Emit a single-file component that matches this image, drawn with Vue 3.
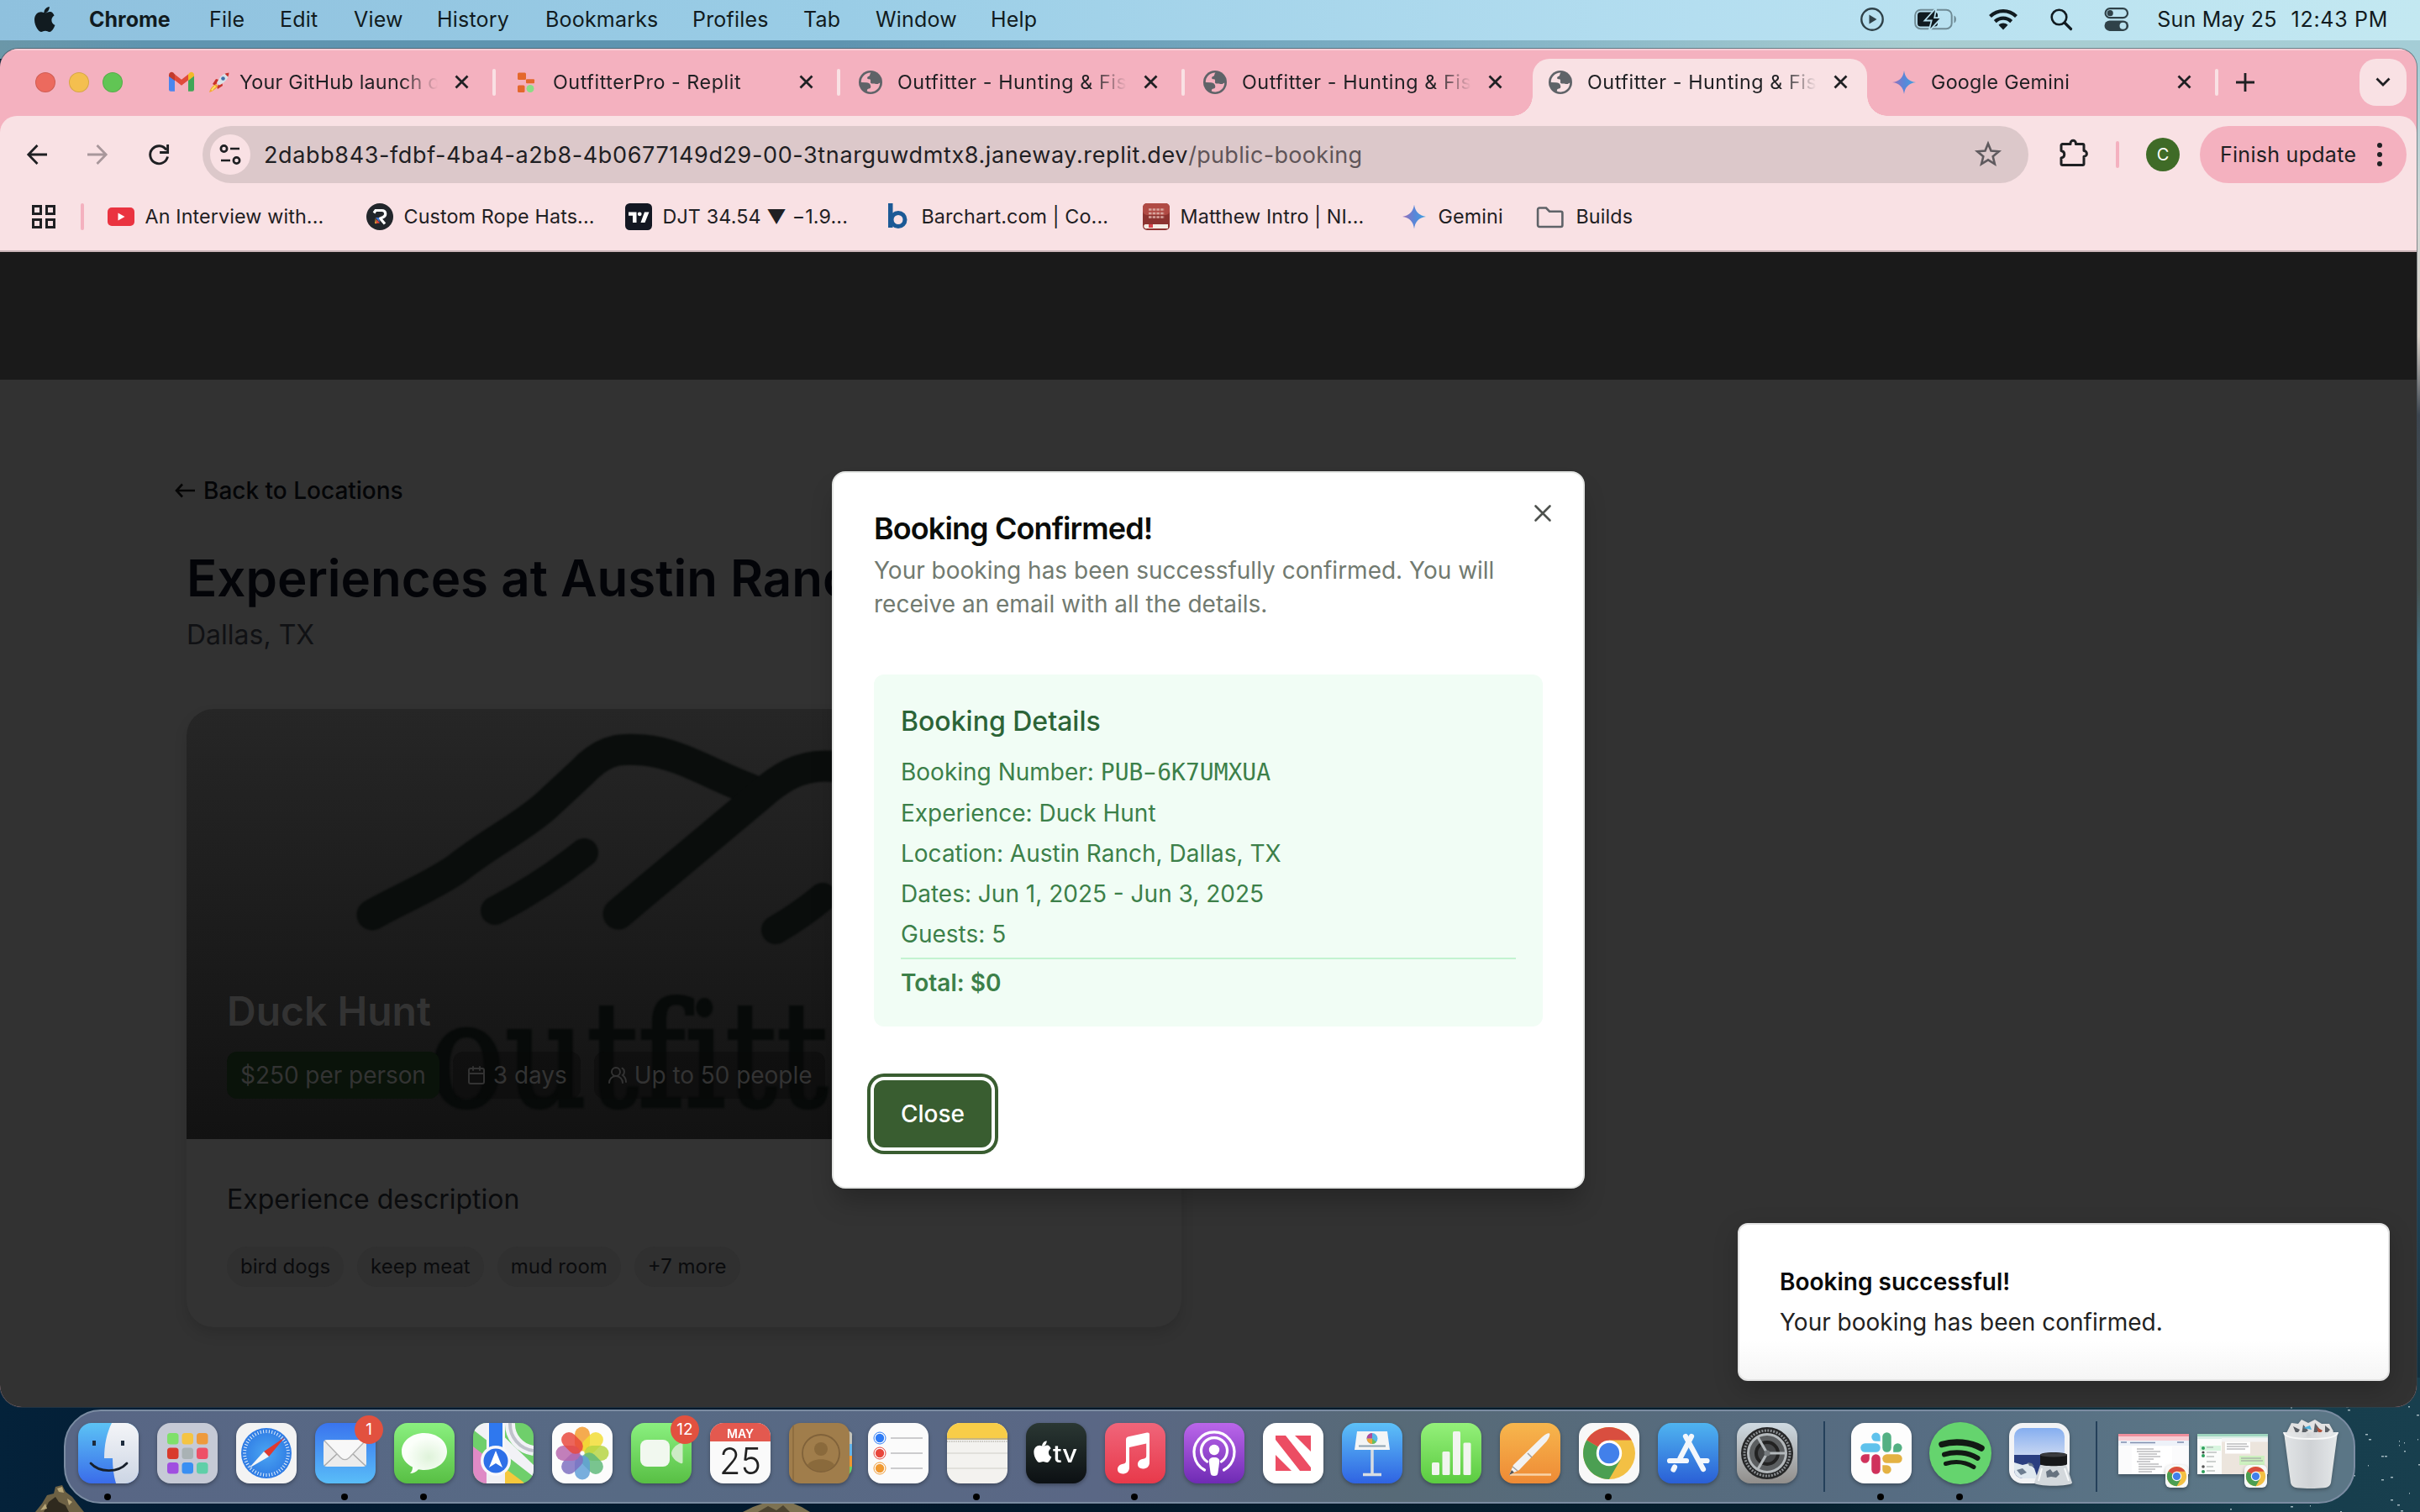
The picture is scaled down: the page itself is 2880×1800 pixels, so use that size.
<script setup>
const menus = [
  { label: 'File', w: 84 },
  { label: 'Edit', w: 88 },
  { label: 'View', w: 99 },
  { label: 'History', w: 129 },
  { label: 'Bookmarks', w: 175 },
  { label: 'Profiles', w: 132 },
  { label: 'Tab', w: 86 },
  { label: 'Window', w: 137 },
  { label: 'Help', w: 60 },
]
const tabs = [
  { icon: 'gmail', title: 'Your GitHub launch of' },
  { icon: 'replit', title: 'OutfitterPro - Replit' },
  { icon: 'globe', title: 'Outfitter - Hunting & Fish' },
  { icon: 'globe', title: 'Outfitter - Hunting & Fish' },
  { icon: 'globe', title: 'Outfitter - Hunting & Fish', active: true },
  { icon: 'gemini', title: 'Google Gemini' },
]
const bookmarks = [
  { icon: 'youtube', label: 'An Interview with...', w: 308 },
  { icon: 'rope', label: 'Custom Rope Hats...', w: 308 },
  { icon: 'tv', label: 'DJT 34.54 ▼ −1.9...', w: 308 },
  { icon: 'barchart', label: 'Barchart.com | Co...', w: 308 },
  { icon: 'bible', label: 'Matthew Intro | NI...', w: 308 },
  { icon: 'gemini', label: 'Gemini', w: 161 },
  { icon: 'folder', label: 'Builds', w: 130 },
]
const tags = ['bird dogs', 'keep meat', 'mud room', '+7 more']
const details = [
  'Experience: Duck Hunt',
  'Location: Austin Ranch, Dallas, TX',
  'Dates: Jun 1, 2025 - Jun 3, 2025',
  'Guests: 5',
]
const ticks = Array.from({ length: 48 }, (_, i) => i * 7.5)
const petals = ['#f39b2d', '#f2dc33', '#b5d443', '#5fb97a', '#5f9fd6', '#7d6fc0', '#b667ad', '#e8483c']
const pads = ['#7fe06a', '#f5c443', '#ee9a3c', '#d93a2c', '#a9b2b4', '#ee5067', '#a04fe0', '#3a8ff2', '#5fcfa8']
const specks = Array.from({ length: 150 }, (_, i) => ({
  x: (i * 73 + ((i * i * 17) % 91)) % 300,
  y: (i * 37 + ((i * i * 11) % 53)) % 240,
  w: 1 + (i % 3),
}))
</script>

<template>
  <div class="desktop">
    <div class="wall">
      <svg class="rocks" width="60" height="32" viewBox="0 0 60 32">
        <path d="M0 32 8 22 14 12 22 10 24 2 32 0 36 8 44 14 50 22 58 32Z" fill="#6d6144" />
        <path d="M10 32 16 20 24 14 28 20 36 24 40 32Z" fill="#2f2a1e" />
        <path d="M26 4 32 2 34 9 28 8ZM6 30 12 22 14 28ZM38 16 44 20 40 24Z" fill="#b9a778" />
      </svg>
      <svg class="rocks mid" width="84" height="11" viewBox="0 0 84 11">
        <path d="M0 11 12 5 26 0H58L70 5 80 11Z" fill="#7d7252" />
        <path d="M18 11 30 4 40 9 48 3 56 11Z" fill="#4b4330" />
      </svg>
      <svg class="specks" width="300" height="240" viewBox="0 0 300 240">
        <rect v-for="(s, i) in specks" :key="i" :x="s.x" :y="s.y" :width="s.w" height="1.5" fill="#c4d6dc" opacity=".8" />
      </svg>
    </div>

    <header class="menubar">
      <svg width="27" height="32" viewBox="0 0 27 32"><path d="M18.800 1c.2 2-.6 3.900-1.700 5.300-1.200 1.400-3 2.400-4.700 2.300-.3-1.900.6-3.900 1.700-5.100 1.200-1.400 3.200-2.400 4.700-2.500zM24.600 11.500c-.2.100-3.200 1.900-3.200 5.600 0 4.400 3.900 5.900 4 5.900 0 .1-.6 2.100-2 4.200-1.300 1.900-2.600 3.700-4.600 3.700s-2.500-1.200-4.900-1.200c-2.300 0-3.100 1.200-5 1.200s-3.200-1.700-4.700-3.900C2.500 24.500 1 20.400 1 16.600c0-6.200 4-9.400 7.900-9.400 2.100 0 3.800 1.400 5.100 1.400 1.200 0 3.200-1.500 5.500-1.500.9 0 3.100.1 5.100 4.400z" fill="#111b20" /></svg>
      <b class="app-name">Chrome</b>
      <span v-for="m in menus" :key="m.label" :style="{ width: m.w + 'px' }">{{ m.label }}</span>
      <div class="status">
        <svg width="28" height="28" viewBox="0 0 28 28"><circle cx="14" cy="14" r="12.700" fill="none" stroke="#2f4148" stroke-width="2.400" /><path d="M10.500 8.500v11l9-5.500z" fill="#2f4148" /></svg>
        <svg class="battery" width="52" height="26" viewBox="0 0 52 26"><rect x="1.200" y="1.700" width="43.500" height="22.500" rx="6.500" fill="none" stroke="#6f8b95" stroke-width="2" /><rect x="4" y="4.500" width="24" height="17" rx="3.500" fill="#111b20" /><path d="M47.500 8.500v9c3.200-1.300 3.200-7.700 0-9z" fill="#6f8b95" /><path d="M26.500-1 12.500 14.500h8.200L17.500 27 32.500 11.200h-8.300z" fill="#111b20" stroke="#b8e0ee" stroke-width="1.800" /></svg>
        <svg class="wifi" width="36" height="26" viewBox="0 0 36 26"><g fill="none" stroke="#111b20" stroke-width="4.200"><path d="M2.500 9.600c8.800-8.600 22.200-8.600 31 0" /><path d="M8.300 15.600c5.600-5.300 13.800-5.300 19.400 0" /></g><path d="M12.500 19.800c3.200-3 7.800-3 11 0L18 25.500z" fill="#111b20" /></svg>
        <svg class="find" width="26" height="26" viewBox="0 0 26 26"><circle cx="10.500" cy="10.500" r="8.800" fill="none" stroke="#111b20" stroke-width="2.600" /><path d="M17 17l7.500 7.500" stroke="#111b20" stroke-width="3.200" stroke-linecap="round" /></svg>
        <svg class="cc" width="30" height="28" viewBox="0 0 30 28"><rect x="1.600" y="1.200" width="26.400" height="11" rx="5.500" fill="none" stroke="#2f4148" stroke-width="2.200" /><circle cx="7.200" cy="6.700" r="3.600" fill="#2f4148" /><rect x=".5" y="15.500" width="28.600" height="12.400" rx="6.200" fill="#2f4148" /><circle cx="22.500" cy="21.700" r="4" fill="#b9e1ee" /></svg>
        <span class="clock"><span>Sun May 25</span><span class="time">12:43 PM</span></span>
      </div>
    </header>

    <main class="window">
      <div class="strip">
        <div class="lights"><i class="r"></i><i class="y"></i><i class="g"></i></div>
        <div v-for="(t, i) in tabs" :key="i" class="tab" :class="{ active: t.active, nosep: t.active || i === 3 }">
          <div class="tab-body">
            <svg v-if="t.icon === 'gmail'" class="fav" width="30" height="28" viewBox="0 0 30 28"><path d="M0 6v16.500A2.200 2.200 0 0 0 2.200 24.700H7V11z" fill="#4a86ee" /><path d="M30 6v16.500a2.200 2.200 0 0 1-2.200 2.200H23V11z" fill="#3fa657" /><path d="M23 4.500V12l7-5.500V5.200c0-2.900-3.200-4.300-5.300-2.600z" fill="#f2b929" /><path d="M7 11.500V4.500l8 6.200 8-6.200v7l-8 6.200z" fill="#e04a3a" /><path d="M0 5.200V7l7 5V4.500L5.300 2.600C3.200.9 0 2.300 0 5.200z" fill="#c23a2e" /></svg>
            <svg v-else-if="t.icon === 'replit'" class="fav" width="28" height="28" viewBox="0 0 28 28"><rect x="4" y="2.500" width="10" height="8.500" rx="1.500" fill="#e4682c" /><rect x="14" y="10.200" width="10" height="5" rx="1" fill="#e4682c" /><rect x="4" y="17.500" width="8.500" height="8.500" rx="1.500" fill="#e4682c" /><circle cx="19" cy="21.500" r="4.500" fill="#8bdc86" /></svg>
            <svg v-else-if="t.icon === 'globe'" class="fav" width="28" height="28" viewBox="0 0 28 28"><circle cx="14" cy="14" r="14" fill="#5f6368" /><path d="M14.500 2.600c-1.500 1.300-.7 3-2 3.800-1.500.9-2.200.6-2.400 2.400-.1 1.400 1.100 1.500 2.600 1.500 1.700.1 1.400 1.900 1.300 3.600-.1 1.500 1.600 1.600 3.300 1.500 2-.1 2.800 1.100 5.400.5l2.500-1.400c.2 5.700-4.500 10.700-10.400 10.900-1.900.1-3.500-.3-5-.9.200-1.900.5-2.600 2.500-2.900 2.300-.4 2.300-2.700 1.500-4.500-.9-2-2.300-2.900-4.900-2.900L2.800 14C2.600 7.800 8 2.300 14.500 2.600z" :fill="t.active ? '#f9e1e4' : '#f4b1bf'" /></svg>
            <svg v-else class="fav" width="28" height="28" viewBox="0 0 28 28"><path d="M14 0c1 8 5.500 13 14 14-8.500 1-13 6-14 14C13 20 8.500 15 0 14 8.500 13 13 8 14 0z" fill="url(#gemTab)" /><defs><linearGradient id="gemTab" x1="0" x2="1"><stop offset="0" stop-color="#9b6fb8" /><stop offset=".5" stop-color="#5a86d8" /><stop offset="1" stop-color="#3fa2e0" /></linearGradient></defs></svg>
            <span class="tab-title">
              <svg v-if="t.icon === 'gmail'" width="26" height="26" viewBox="0 0 26 26"><path d="M5 15l4-6 4 1-5 7zM11 21l6-4-1-5-6 6z" fill="#c9332b" /><path d="M24.500 1.500c-6 .5-10.500 4-14.500 12l3 3c8-4 11-9 11.500-15z" fill="#d9e2e8" /><path d="M24.500 1.500c-2 .2-3.600.6-5 1.200l3.800 3.800c.7-1.500 1.100-3 1.200-5z" fill="#c9332b" /><circle cx="17.500" cy="8.500" r="2.300" fill="#3f6fa8" /><path d="M9 15l2.500 2.500C9 21 5.500 23.500 1 25c1-4.500 4-8 8-10z" fill="#f3a72e" /><path d="M8.500 17.500c-2 1.500-3.500 3-4.500 5" stroke="#fbe36a" stroke-width="2" /></svg>
              <span :class="{ wide: t.icon !== 'gmail' && t.icon !== 'gemini' }">{{ t.title }}</span>
            </span>
            <svg width="17" height="17" viewBox="0 0 17 17"><path d="M1.500 1.500l14 14m0-14l-14 14" stroke="#1f2023" stroke-width="2.800" /></svg>
          </div>
        </div>
        <svg class="plus" width="22" height="22" viewBox="0 0 22 22"><path d="M11 0v22M0 11h22" stroke="#1f2023" stroke-width="2.800" /></svg>
        <div class="chev"><svg width="18" height="12" viewBox="0 0 18 12"><path d="M1.500 1.500L9 9l7.500-7.500" fill="none" stroke="#1f2023" stroke-width="2.800" /></svg></div>
      </div>

      <div class="toolbar">
        <div class="nav">
          <svg width="24" height="24" viewBox="0 0 24 24"><path d="M24 12H2M12.500 1L1.800 12l10.700 11" fill="none" stroke="#1f2023" stroke-width="2.800" /></svg>
          <svg width="24" height="24" viewBox="0 0 24 24"><path d="M0 12h22M11.500 1l10.700 11-10.700 11" fill="none" stroke="#a8979b" stroke-width="2.800" /></svg>
          <svg width="26" height="26" viewBox="0 0 26 26"><path d="M23.500 15.500A10.500 10.500 0 1 1 22 7.500" fill="none" stroke="#1f2023" stroke-width="2.900" /><path d="M23.600 1v9.500h-9.500" fill="none" stroke="#1f2023" stroke-width="2.900" /></svg>
        </div>
        <div class="omni">
          <div class="site"><svg width="26" height="24" viewBox="0 0 26 24"><g fill="none" stroke="#1f2023" stroke-width="2.700"><circle cx="5.500" cy="5" r="3.600" /><path d="M13 5h11M2 19h11" /><circle cx="20.500" cy="19" r="3.600" /></g></svg></div>
          <span class="url">2dabb843-fdbf-4ba4-a2b8-4b0677149d29-00-3tnarguwdmtx8.janeway.replit.dev<em>/public-booking</em></span>
          <svg width="32" height="32" viewBox="0 0 32 32"><path d="M16 3l3.500 8.600 9.300.7-7.100 6 2.200 9L16 22.400l-7.900 4.900 2.200-9-7.100-6 9.300-.7z" fill="none" stroke="#5f5a5e" stroke-width="2.600" /></svg>
        </div>
        <svg class="puzzle" width="36" height="34" viewBox="0 0 36 34"><path d="M4.500 6.500h9.500v-1a3.200 3.200 0 0 1 6.400 0v1h8.100a1.500 1.500 0 0 1 1.500 1.500v6.500a3.400 3.400 0 0 1 0 6.800v8.700a1.500 1.500 0 0 1-1.500 1.500h-24A1.500 1.500 0 0 1 3 30V23c5-.8 5-7.700 0-8.500V8a1.500 1.500 0 0 1 1.500-1.500z" fill="none" stroke="#1f2023" stroke-width="3" stroke-linejoin="round" /></svg>
        <i class="vsep"></i>
        <div class="avatar">C</div>
        <div class="update"><span>Finish update</span><svg width="6" height="30" viewBox="0 0 6 30"><g fill="#1f2023"><circle cx="3" cy="4" r="3" /><circle cx="3" cy="15" r="3" /><circle cx="3" cy="26" r="3" /></g></svg></div>
      </div>

      <div class="bookmarks">
        <svg width="28" height="28" viewBox="0 0 28 28"><g fill="none" stroke="#1f2023" stroke-width="3"><rect x="1.500" y="1.500" width="9" height="9" /><rect x="17.500" y="1.500" width="9" height="9" /><rect x="1.500" y="17.500" width="9" height="9" /><rect x="17.500" y="17.500" width="9" height="9" /></g></svg>
        <i class="vsep"></i>
        <div v-for="b in bookmarks" :key="b.label" class="bm" :style="{ width: b.w + 'px' }">
          <svg v-if="b.icon === 'youtube'" width="32" height="32" viewBox="0 0 32 32"><rect y="5" width="32" height="22" rx="5" fill="#ea3340" /><path d="M12.500 11.500v9l8-4.500z" fill="#fff" /></svg>
          <svg v-else-if="b.icon === 'rope'" width="32" height="32" viewBox="0 0 32 32"><circle cx="16" cy="16" r="16" fill="#22262b" /><path d="M9 11.500L11 8.500h7.500c5 0 5.500 6 1.500 8L16.500 18l5.500 6.500" fill="none" stroke="#fff" stroke-width="3.200" /><path d="M11 17h4l1 6z" fill="#3c78d8" /><path d="M11 17l-1 7 2 .2z" fill="#f2a43a" /><path d="M12 19l0 5 4-.5z" fill="#e0443a" /></svg>
          <svg v-else-if="b.icon === 'tv'" width="32" height="32" viewBox="0 0 32 32"><rect width="32" height="32" rx="5.500" fill="#131722" /><path d="M4 10.500h9.500V23H9v-8.200H4zM23 10.500h5.500L23.500 23h-5z" fill="#fff" /><circle cx="17.200" cy="12.800" r="2.400" fill="#fff" /></svg>
          <svg v-else-if="b.icon === 'barchart'" width="32" height="32" viewBox="0 0 32 32"><rect x="5" y="0" width="5.500" height="29" fill="#1c5a96" /><ellipse cx="17" cy="19.500" rx="8" ry="8" fill="none" stroke="#1c5a96" stroke-width="5" /></svg>
          <svg v-else-if="b.icon === 'bible'" width="32" height="32" viewBox="0 0 32 32"><rect width="32" height="32" rx="5" fill="#8c3330" /><rect y="0" width="32" height="14" rx="5" fill="#b04a44" /><path d="M3 25h27v5H5a2.500 2.500 0 0 1-2-5z" fill="#f4ece4" /><rect x="7" y="25" width="5" height="4" fill="#d9434a" /><g stroke="#d8a49c" stroke-width="2.600" stroke-dasharray="3.500 1.200"><path d="M7 7.500h19M7 12h19M7 16.500h19" /></g></svg>
          <svg v-else-if="b.icon === 'gemini'" width="31" height="32" viewBox="1 0 31 32"><path d="M16 1.500c1 8 5.500 13 14 14.500-8.500 1-13 6-14 14.500C15 22 10.500 17 2 16 10.500 14.500 15 9.500 16 1.500z" fill="url(#gemBm)" /><defs><linearGradient id="gemBm" x1="0" x2="1"><stop offset="0" stop-color="#9b6fb8" /><stop offset=".5" stop-color="#5a86d8" /><stop offset="1" stop-color="#3fa2e0" /></linearGradient></defs></svg>
          <svg v-else width="34" height="32" viewBox="0 0 34 32"><path d="M3 5.500h8l4 4.200h13.500A1.900 1.900 0 0 1 30.400 11.600v14.500a1.900 1.900 0 0 1-1.900 1.900H3a1.900 1.900 0 0 1-1.900-1.900V7.400A1.900 1.900 0 0 1 3 5.500z" fill="none" stroke="#5f6368" stroke-width="2.600" /></svg>
          <span>{{ b.label }}</span>
        </div>
      </div>

      <div class="page">
        <div class="hero"></div>
        <section class="content">
          <a class="back"><svg width="24" height="20" viewBox="0 0 24 20"><path d="M24 10H3M9 2.500L2 10l7 7.500" fill="none" stroke="#050505" stroke-width="2.600" /></svg>Back to Locations</a>
          <h1>Experiences at Austin Ranch</h1>
          <p class="sub">Dallas, TX</p>
          <article class="card">
            <div class="photo">
              <svg class="art" width="1184" height="512" viewBox="0 0 1184 512">
                <g fill="none" stroke="#0a0d0c" stroke-linecap="round" stroke-linejoin="round" stroke-width="37">
                  <path d="M221 245C258 224 296 210 337 176C368 150 400 118 429 90C450 70 464 56 484 60" stroke-opacity="0" />
                  <path d="M221 245C262 224 296 210 334 174C368 142 400 112 429 90" stroke-opacity="0" />
                  <path d="M221 245C258 224 290 212 322 190C362 158 398 142 429 114C452 92 462 84 478 68C502 46 522 47 544 49C584 52 624 78 672 96" />
                  <path d="M514 244L681 104C706 82 728 68 760 68C806 68 850 90 900 130" />
                  <path d="M367 240C405 220 442 196 473 171" stroke-width="34" />
                  <path d="M701 263C720 252 738 240 757 224" stroke-width="34" />
                </g>
                <text x="288" y="473" textLength="637" lengthAdjust="spacingAndGlyphs">outfitter</text>
              </svg>
              <h2>Duck Hunt</h2>
              <div class="badges">
                <span class="badge price">$250 per person</span>
                <span class="badge"><svg width="24" height="24" viewBox="0 0 24 24" fill="none" stroke="#333" stroke-width="2" stroke-linejoin="round" stroke-linecap="round"><rect x="3" y="4" width="18" height="18" rx="2" /><path d="M16 2v4M8 2v4M3 10h18" /></svg>3 days</span>
                <span class="badge"><svg width="24" height="24" viewBox="0 0 24 24" fill="none" stroke="#333" stroke-width="2" stroke-linecap="round"><path d="M18 21a8 8 0 0 0-16 0" /><circle cx="10" cy="8" r="5" /><path d="M22 20c0-3.400-2-6.500-4-8a5 5 0 0 0-.5-8.300" /></svg>Up to 50 people</span>
              </div>
            </div>
            <div class="body">
              <p>Experience description</p>
              <div class="tags"><span v-for="t in tags" :key="t">{{ t }}</span></div>
            </div>
          </article>
        </section>

        <div class="overlay">
          <div class="modal">
            <svg class="x" width="20" height="20" viewBox="0 0 20 20"><path d="M1.500 1.500l17 17m0-17l-17 17" stroke="#4e524e" stroke-width="2.600" stroke-linecap="round" /></svg>
            <h3>Booking Confirmed!</h3>
            <p class="desc">Your booking has been successfully confirmed. You will receive an email with all the details.</p>
            <div class="box">
              <h4>Booking Details</h4>
              <p>Booking Number: <code>PUB<span class="dash">-</span>6K7UMXUA</code></p>
              <p v-for="d in details" :key="d">{{ d }}</p>
              <p class="total">Total: $0</p>
            </div>
            <button>Close</button>
          </div>
        </div>

        <div class="toast"><b>Booking successful!</b><p>Your booking has been confirmed.</p></div>
      </div>
    </main>

    <footer class="dock">
      <div class="slot run"><svg viewBox="0 0 72 72"><defs><linearGradient id="fi" x2="0" y2="1"><stop stop-color="#5cc3f5" /><stop offset="1" stop-color="#3a6cea" /></linearGradient><linearGradient id="fw" x2="0" y2="1"><stop stop-color="#f4f5f8" /><stop offset="1" stop-color="#ccd5e4" /></linearGradient><clipPath id="sq"><rect width="72" height="72" rx="16" /></clipPath></defs><g clip-path="url(#sq)"><rect width="72" height="72" fill="url(#fi)" /><path d="M40 0C34 12 31 26 31 42h10c0 10 1 20 4 30h27V0z" fill="url(#fw)" /></g><path d="M19 21v6M53 21v6" stroke="#1d2b3d" stroke-width="4" /><path d="M15 48c10 11 32 12 43 0" fill="none" stroke="#17202c" stroke-width="2.800" stroke-linecap="round" /></svg></div>
      <div class="slot"><svg viewBox="0 0 72 72"><rect width="72" height="72" rx="16" fill="#c6cad6" /><rect v-for="(c, i) in pads" :key="i" :x="12 + (i % 3) * 17.500" :y="12 + Math.floor(i / 3) * 17.500" width="13.500" height="13.500" rx="3.500" :fill="c" /></svg></div>
      <div class="slot"><svg viewBox="0 0 72 72"><defs><radialGradient id="sf"><stop stop-color="#4aa5f2" /><stop offset="1" stop-color="#2f7be4" /></radialGradient></defs><rect width="72" height="72" rx="16" fill="#f3f3f3" /><circle cx="36" cy="36" r="30" fill="url(#sf)" /><path v-for="a in ticks" :key="a" d="M36 8v4" :transform="`rotate(${a} 36 36)`" stroke="#e2eefb" stroke-width="1" /><path d="M58 17L39 40l-6-6z" fill="#e0392f" /><path d="M15 54l18-20 6 6z" fill="#f3f5f7" /></svg></div>
      <div class="slot run"><svg viewBox="0 0 72 72"><defs><linearGradient id="ma" x2="0" y2="1"><stop stop-color="#3a74ee" /><stop offset="1" stop-color="#59bdf8" /></linearGradient></defs><rect width="72" height="72" rx="16" fill="url(#ma)" /><rect x="10" y="20" width="51" height="32" rx="4" fill="#ececec" /><path d="M11 51l17-16M60 51L43 35" stroke="#a9a9a9" stroke-width="1.400" /><path d="M11 21l19 20c3.500 3.500 7.500 3.500 11 0l19-20" fill="#f8f8f8" stroke="#b3b3b3" stroke-width="1.400" /></svg><span class="pill">1</span></div>
      <div class="slot run"><svg viewBox="0 0 72 72"><defs><linearGradient id="gr" x2="0" y2="1"><stop stop-color="#8af07f" /><stop offset="1" stop-color="#58bf44" /></linearGradient><radialGradient id="bub" cx=".6" cy=".6"><stop stop-color="#dff3da" /><stop offset="1" stop-color="#fbfffa" /></radialGradient></defs><rect width="72" height="72" rx="16" fill="url(#gr)" /><path d="M36 12c15 0 27 9.500 27 22S51 56 36 56c-2.500 0-5-.3-7-.8-2.500 2.800-6 4.800-10 4.800 2-2 3-4.500 3-7.500C14 48.500 9 42 9 34c0-12.500 12-22 27-22z" fill="url(#bub)" /></svg></div>
      <div class="slot"><svg viewBox="0 0 72 72"><g clip-path="url(#sq)"><rect width="72" height="72" fill="#6fcf6b" /><path d="M0 8l72 56v-14L20 0H0z" fill="#f2f2f6" /><path d="M0 28v44h18V42z" fill="#df8ac6" /><path d="M38 54l24 18H38z" fill="#f5c83c" /><path d="M72 33A32 32 0 0 1 44 0" fill="none" stroke="#f2f2f6" stroke-width="12" /><path d="M72 33A32 32 0 0 1 44 0" fill="none" stroke="#bfc2cb" stroke-width="4" /><path d="M16 0h22v72H16z" fill="#f5f5f8" /><path d="M19 0h16v72H19z" fill="#2f78ee" /><path d="M16 60h22v12H16z" fill="#f0f0f4" /></g><circle cx="27" cy="45" r="18" fill="#f7f7fb" /><circle cx="27" cy="45" r="14.500" fill="#2d6fe8" /><path d="M27 33l8 20-8-5-8 5z" fill="#fff" /></svg></div>
      <div class="slot"><svg viewBox="0 0 72 72"><rect width="72" height="72" rx="16" fill="#fcfcfc" /><rect v-for="(c, i) in petals" :key="c" x="27" y="4.500" width="18" height="29" rx="9" :fill="c" opacity=".84" :transform="`rotate(${i * 45} 36 36)`" /></svg></div>
      <div class="slot"><svg viewBox="0 0 72 72"><rect width="72" height="72" rx="16" fill="url(#gr)" /><rect x="11" y="20" width="35" height="32" rx="8" fill="#f1f8ef" /><path d="M48 36c0-4 5-10 11-12 2-.6 2.500 0 2.500 2v20c0 2-.5 2.600-2.500 2-6-2-11-8-11-12z" fill="#cdebc5" /></svg><span class="pill">12</span></div>
      <div class="slot"><svg viewBox="0 0 72 72"><g clip-path="url(#sq)"><rect width="72" height="72" fill="#fafafa" /><rect width="72" height="22" fill="#e3594f" /></g><text x="36" y="17.500" font-size="14" font-weight="600" fill="#fff" text-anchor="middle">MAY</text><text x="36" y="60.500" font-size="43" font-weight="300" fill="#222" text-anchor="middle" textLength="50" lengthAdjust="spacingAndGlyphs">25</text></svg></div>
      <div class="slot"><svg viewBox="0 0 72 72"><path d="M66 10h5a4 4 0 0 1 4 5v10h-9z" fill="#c4c3b8" /><path d="M66 25h9v14h-9z" fill="#63b4ea" /><path d="M66 39h9v13h-9z" fill="#f0962f" /><path d="M66 52h9c0 6-3 10-9 12z" fill="#6cce63" /><rect width="72" height="72" rx="14" fill="#a07d4b" /><path d="M5 3v66" stroke="#8a6a3c" stroke-width="1.500" /><circle cx="38" cy="36" r="22" fill="none" stroke="#80623a" stroke-width="1.800" /><circle cx="38" cy="31" r="8" fill="#8a6a3c" /><path d="M22 50c5-9 27-9 32 0-8 10-24 10-32 0z" fill="#8a6a3c" /></svg></div>
      <div class="slot"><svg viewBox="0 0 72 72"><rect width="72" height="72" rx="16" fill="#fbfbfb" /><path d="M27 18h38M27 36h38M27 54h38" stroke="#bdbdc0" stroke-width="1.500" /><circle cx="14" cy="18" r="5.200" fill="#2f7cf6" /><circle cx="14" cy="36" r="5.200" fill="#e8463c" /><circle cx="14" cy="54" r="5.200" fill="#f09a33" /><g fill="none" stroke-width="1"><circle cx="14" cy="18" r="6" stroke="#fff" /><circle cx="14" cy="36" r="6" stroke="#fff" /><circle cx="14" cy="54" r="6" stroke="#fff" /><circle cx="14" cy="18" r="7" stroke="#2f7cf6" /><circle cx="14" cy="36" r="7" stroke="#e8463c" /><circle cx="14" cy="54" r="7" stroke="#f09a33" /></g></svg></div>
      <div class="slot run"><svg viewBox="0 0 72 72"><g clip-path="url(#sq)"><rect width="72" height="72" fill="#f3f2ef" /><rect width="72" height="18" fill="#f8cd48" /><path d="M0 19h72" stroke="#b9a05c" stroke-width="1.500" /><path d="M0 22h72" stroke="#b5b2aa" stroke-width="1.400" stroke-dasharray="1.300 1.300" /><path d="M0 36h72M0 54h72" stroke="#cfcdc8" stroke-width="1.200" /></g></svg></div>
      <div class="slot"><svg viewBox="0 0 72 72"><defs><linearGradient id="atv" x2="0" y2="1"><stop stop-color="#2a3733" /><stop offset="1" stop-color="#0c1013" /></linearGradient></defs><rect width="72" height="72" rx="16" fill="url(#atv)" /><path d="M18.800 1c.2 2-.6 3.900-1.700 5.300-1.200 1.400-3 2.400-4.700 2.300-.3-1.900.6-3.900 1.700-5.100 1.200-1.400 3.200-2.400 4.700-2.500zM24.600 11.500c-.2.100-3.200 1.900-3.200 5.600 0 4.400 3.900 5.900 4 5.900 0 .1-.6 2.100-2 4.200-1.300 1.900-2.600 3.700-4.600 3.700s-2.500-1.200-4.900-1.200c-2.300 0-3.100 1.200-5 1.200s-3.200-1.700-4.700-3.900C2.500 24.500 1 20.400 1 16.600c0-6.200 4-9.400 7.900-9.400 2.100 0 3.800 1.400 5.100 1.400 1.200 0 3.200-1.500 5.500-1.500.9 0 3.100.1 5.100 4.400z" fill="#fff" transform="translate(8.500 20.500) scale(.86)" /><text x="32" y="47" font-size="28" font-weight="500" fill="#fff" textLength="29" lengthAdjust="spacingAndGlyphs">tv</text></svg></div>
      <div class="slot run"><svg viewBox="0 0 72 72"><defs><linearGradient id="mu" x2="0" y2="1"><stop stop-color="#f0657a" /><stop offset="1" stop-color="#e8394a" /></linearGradient></defs><rect width="72" height="72" rx="16" fill="url(#mu)" /><path d="M25 20c0-2 1-3.300 3-3.700l22-4.800c2-.4 3 .4 3 2.400v33c0 5-3.500 7.600-8 7.600-3.700 0-6-2.200-6-5.200 0-4 3-5.700 6.500-6.500 3-.7 3.700-1.500 3.700-4V24.500L29 29v24c0 5-3.500 7.500-8 7.500-3.700 0-6-2.200-6-5.200 0-4 3-5.700 6.500-6.500 2.800-.6 3.500-1.500 3.500-4z" fill="#fff" /></svg></div>
      <div class="slot"><svg viewBox="0 0 72 72"><defs><linearGradient id="po" x2="0" y2="1"><stop stop-color="#bb66ea" /><stop offset="1" stop-color="#6f2bb4" /></linearGradient></defs><rect width="72" height="72" rx="16" fill="url(#po)" /><g fill="none" stroke="#fff" stroke-width="3.200" stroke-linecap="round"><path d="M24.500 56A24 24 0 1 1 47.500 56" /><path d="M27.500 46A15.500 15.500 0 1 1 44.500 46" /></g><circle cx="36" cy="32" r="6.200" fill="#fff" /><path d="M36 41c4.500 0 6.500 2 6.200 5l-1.700 13c-.4 3-1.700 4-4.500 4s-4.100-1-4.500-4l-1.700-13c-.3-3 1.700-5 6.200-5z" fill="#fff" /></svg></div>
      <div class="slot"><svg viewBox="0 0 72 72"><rect width="72" height="72" rx="16" fill="#fff" /><path d="M15 15h12l30 38v4H44L15 20zM38 15h19v19zM15 38v19h19z" fill="#ec4d63" /></svg></div>
      <div class="slot"><svg viewBox="0 0 72 72"><defs><linearGradient id="ke" x2="0" y2="1"><stop stop-color="#5dc1f8" /><stop offset="1" stop-color="#2f63e2" /></linearGradient></defs><rect width="72" height="72" rx="16" fill="url(#ke)" /><path d="M18 10h36l3 22H15z" fill="#f4f5f6" /><path d="M20 27.500h32" stroke="#8fa3b3" stroke-width="2" /><circle cx="36" cy="18.500" r="6.500" fill="#58b6e8" /><path d="M36 18.500V12a6.500 6.500 0 0 0-6.500 6.500z" fill="#b04a9c" /><path d="M36 18.500h-6.500A6.500 6.500 0 0 0 36 25z" fill="#f0a33a" /><path d="M36 18.500V25a6.500 6.500 0 0 0 5-2.300z" fill="#6cc05a" /><path d="M36 32v28M25 61.500h22" stroke="#d8dde2" stroke-width="3.500" /></svg></div>
      <div class="slot"><svg viewBox="0 0 72 72"><defs><linearGradient id="nu" x2="0" y2="1"><stop stop-color="#94f07a" /><stop offset="1" stop-color="#5bcb40" /></linearGradient></defs><rect width="72" height="72" rx="16" fill="url(#nu)" /><g fill="#f1f5ef"><rect x="13" y="47" width="9" height="15" rx="1.500" /><rect x="25.500" y="34" width="9" height="28" rx="1.500" /><rect x="38" y="10" width="9" height="52" rx="1.500" /><rect x="50.500" y="23.500" width="9" height="38.500" rx="1.500" /></g></svg></div>
      <div class="slot"><svg viewBox="0 0 72 72"><defs><linearGradient id="pa" x2="0" y2="1"><stop stop-color="#f7b64d" /><stop offset="1" stop-color="#ee8a35" /></linearGradient></defs><rect width="72" height="72" rx="16" fill="url(#pa)" /><path d="M12 61.500h49" stroke="#f9d3a8" stroke-width="2.400" /><path d="M11 62l5-12L50 17c4-4 8-5.500 9-4.500s0 5-3.500 9.500L23 56z" fill="#f2f2f2" /><path d="M33 36l5 5M15 52l6 5" stroke="#9f9f9f" stroke-width="1.500" /><path d="M11 62l3-6 3 3z" fill="#555" /></svg></div>
      <div class="slot run"><svg viewBox="0 0 72 72"><defs><g id="chr"><circle cx="36" cy="36" r="31" fill="#f3c044" /><path d="M36 36L9.200 20.500A31 31 0 0 1 62.800 20.500H36z" fill="#d94e3f" /><path d="M36 36L9.200 20.500A31 31 0 0 0 36 67l13.500-23.300z" fill="#4b9f52" /><circle cx="36" cy="36" r="15.200" fill="#fff" /><circle cx="36" cy="36" r="12.200" fill="#4280ea" /></g></defs><rect width="72" height="72" rx="16" fill="#f8f8f8" /><use href="#chr" /></svg></div>
      <div class="slot"><svg viewBox="0 0 72 72"><defs><linearGradient id="as" x2="0" y2="1"><stop stop-color="#4fb4f0" /><stop offset="1" stop-color="#2a5fd6" /></linearGradient></defs><rect width="72" height="72" rx="16" fill="url(#as)" /><g stroke="#f3f7fc" stroke-width="6.200" stroke-linecap="round"><path d="M40 16L26.500 42M14 45h20M20 52.500l-1.500 3" /><path d="M33 16l21 39M49 45h9.500" /></g></svg></div>
      <div class="slot"><svg viewBox="0 0 72 72"><defs><linearGradient id="se" x2="0" y2="1"><stop stop-color="#cfdae2" /><stop offset="1" stop-color="#918e8b" /></linearGradient></defs><rect width="72" height="72" rx="16" fill="url(#se)" /><circle cx="36" cy="36" r="31" fill="#262728" /><circle cx="36" cy="36" r="27" fill="none" stroke="#8b8f92" stroke-width="3" stroke-dasharray="2 1.530" /><circle cx="36" cy="36" r="22.500" fill="#5b5e60" stroke="#b4b9bc" stroke-width="3" /><circle cx="36" cy="36" r="13" fill="#454749" stroke="#222" stroke-width="4" /><path d="M36 36h22M36 36L25 17M36 36L25 55" stroke="#b4b9bc" stroke-width="3.200" /><circle cx="36" cy="36" r="3.500" fill="#75797c" /></svg></div>
      <i class="div"></i>
      <div class="slot run"><svg viewBox="0 0 72 72"><rect width="72" height="72" rx="16" fill="#fdfdfd" /><g stroke-width="10.500" stroke-linecap="round"><path d="M16.500 29.500h13" stroke="#5fc2ec" /><path d="M42.500 16.500v13" stroke="#53b083" /><path d="M42.500 42.500h13" stroke="#e4b243" /><path d="M29.500 42.500v13" stroke="#d0325c" /></g><path d="M34.700 21.800h-5.200a5.200 5.200 0 1 1 5.200-5.200z" fill="#5fc2ec" /><path d="M50.200 34.700v-5.200a5.200 5.200 0 1 1 5.200 5.200z" fill="#53b083" /><path d="M37.300 50.200h5.200a5.200 5.200 0 1 1-5.200 5.200z" fill="#e4b243" /><path d="M21.800 37.300v5.200a5.200 5.200 0 1 1-5.200-5.200z" fill="#d0325c" /></svg></div>
      <div class="slot run"><svg viewBox="0 0 72 72"><circle cx="36" cy="36" r="37" fill="#65d46e" /><g fill="none" stroke="#121a14" stroke-linecap="round"><path d="M14 25.500c15-4.500 34-3 47 4.500" stroke-width="7.500" /><path d="M17 37.500c13-4 28-2.500 39.500 4.300" stroke-width="6" /><path d="M18.500 48.500c11-3.300 23.500-2 33.500 4" stroke-width="5" /></g></svg></div>
      <div class="slot"><svg viewBox="0 0 72 72"><defs><linearGradient id="pv" x2="0" y2="1"><stop stop-color="#85aef0" /><stop offset="1" stop-color="#c7d6f2" /></linearGradient></defs><rect width="72" height="72" rx="16" fill="#f2f3f5" /><path d="M6 38V16A10 10 0 0 1 16 6h40a10 10 0 0 1 10 10v22z" fill="url(#pv)" /><path d="M6 38h60v20a9 9 0 0 1-9 8H16A10 10 0 0 1 6 56z" fill="#2b3f80" /><path d="M6 47l10 3 8-2 6 6 4 12H16A10 10 0 0 1 6 56z" fill="#dfe8ef" /><path d="M9 56l7-2 5 5-7 3zM22 47l5 1 3 4-6-1z" fill="#6d7d90" /><path d="M37 50h31l7 21c0 5-45 5-45 0z" fill="#d3d8dc" /><path d="M39 54l-4 15M66 54l5 15" stroke="#f6f8f9" stroke-width="2" /><path d="M44 58l5-3 3 4 5-3 3 5-4 4-6-1-5 1z" fill="#66727f" /><path d="M37 38c0-4 32-4 32 0v11c0 3-32 3-32 0z" fill="#17181a" /><ellipse cx="53" cy="38" rx="16" ry="2.500" fill="#3a3b3e" /></svg></div>
      <i class="div second"></i>
      <div class="slot mini"><svg width="84" height="48" viewBox="0 0 84 48"><rect width="84" height="48" fill="#fbfbfc" /><rect width="84" height="3" fill="#ef8f9c" /><rect y="3" width="84" height="5" fill="#f8cdd4" /><rect y="8" width="84" height="6" fill="#eef2f9" /><path d="M3 10h7M14 10.500h30M70 10h8" stroke="#7f8fb0" stroke-width="1.500" /><rect x="16" y="15" width="48" height="33" fill="#fff" /><path d="M22 18h20M22 21h28M24 24h22M24 27h26M24 30h18M22 33h16M24 36h24M24 39h28M24 42h20M24 45h16" stroke="#9a9a9e" stroke-width="1.100" /></svg><svg class="tag-chrome" width="28" height="28" viewBox="0 0 72 72"><rect width="72" height="72" rx="16" fill="#f8f8f8" /><use href="#chr" /></svg></div>
      <div class="slot mini"><svg width="84" height="48" viewBox="0 0 84 48"><rect width="84" height="48" fill="#fbfcfb" /><rect width="84" height="3" fill="#9fd6bf" /><rect y="3" width="84" height="3" fill="#d9efe6" /><rect x="29" y="6" width="55" height="42" fill="#ece5dd" /><rect x="29" y="5" width="55" height="4.500" fill="#f4f4f4" /><rect x="3" y="14" width="25" height="6" fill="#d8f5df" /><rect x="33" y="9.500" width="30" height="14" fill="#fff" /><rect x="50" y="26" width="30" height="11" fill="#cdf0bf" /><path d="M35 12h24M35 15h26M35 18h22M52 29h24M52 32h26" stroke="#9a9a9e" stroke-width="1.100" /><g fill="#2c9f5b"><circle cx="7" cy="17" r="2" /><circle cx="7" cy="26" r="2" /><circle cx="7" cy="45" r="2" /></g><circle cx="7" cy="22" r="1.600" fill="#444" /><circle cx="7" cy="39" r="1.800" fill="#555" /><path d="M11 16h8M11 22h12M11 27h9M11 33h11M11 39h8M11 44h10" stroke="#9fa5a3" stroke-width="1" /></svg><svg class="tag-chrome" width="28" height="28" viewBox="0 0 72 72"><rect width="72" height="72" rx="16" fill="#f8f8f8" /><use href="#chr" /></svg></div>
      <div class="slot trash"><svg width="66" height="84" viewBox="0 0 66 84"><defs><linearGradient id="tr" x2="1"><stop stop-color="#e9ebec" /><stop offset=".5" stop-color="#d6d8da" /><stop offset="1" stop-color="#eceeef" /></linearGradient></defs><path d="M4 18L10 6l8 1 4-5 8 4 8-4 8 5 9 0 5 9-6 8H8z" fill="#e2e2e2" /><path d="M12 10l8 4-4 6zM24 8l6 7-8 5zM38 6l6 8-8 7zM50 9l6 5-6 6zM28 17l6 4-6 2z" fill="#5b6066" /><path d="M24 12l8-3 2 5z" fill="#4cb0dd" /><path d="M40 11l7 4-4 5z" fill="#b0523c" /><path d="M1 17h64l-8 60c-1 4-4 6-8 6.300-10 1-22 1-32 0-4-.3-7-2.300-8-6.300z" fill="url(#tr)" opacity=".96" /><path d="M1 17c0 6 14 8 32 8s32-2 32-8" fill="none" stroke="#f7f8f8" stroke-width="2" /></svg></div>
    </footer>
  </div>
</template>

<style>
body { background: #0b2434; }
</style>
<style scoped>
* { box-sizing: border-box; margin: 0; padding: 0; }
svg { display: block; flex: none; overflow: visible; }
.desktop {
  position: relative; width: 2880px; height: 1800px; overflow: hidden;
  display: flex; flex-direction: column;
  font-family: Inter, "Liberation Sans", sans-serif; color: #1f2023; white-space: nowrap;
}
.wall {
  position: absolute; inset: 0;
  background:
    linear-gradient(90deg, #6b97a8, #5f95b0 6%, #5f94b0 35%, #7eb0c5 60%, #a9cdd0 80%, #a4cdd6) 0 0 / 2860px 70px no-repeat,
    linear-gradient(180deg, #a4cdd6 70px, #d3d8d6 260px, #d8cfc6 400px, #3d4650 494px, #45514f 700px, #3f7184 780px, #35667a 1000px, #1f4458 1400px, #12313f 1640px) 100% 0 / 20px 1640px no-repeat,
    linear-gradient(90deg, #04223a, #031c33 8%, #021829 45%, #06202f 75%, #163d4c 94%, #183f4e);
}
.rocks { position: absolute; left: 42px; bottom: 0; }
.rocks.mid { left: 884px; }
.specks { position: absolute; right: 0; bottom: 0; }

.menubar {
  position: relative; height: 48px; margin-bottom: 10px; display: flex; align-items: center;
  padding: 0 38px 2px 40px; background: linear-gradient(90deg, #8fc1de, #9acde6 35%, #b4def0 70%, #c3e8f1);
  font-size: 25px; letter-spacing: .2px; color: #111b20;
}
.app-name { width: 143px; margin-left: 39px; letter-spacing: 0; }
.status { display: flex; align-items: center; margin-left: auto; }
.battery { margin-left: 36px; }
.wifi { margin-left: 36px; }
.find { margin-left: 38px; }
.cc { margin-left: 38px; }
.clock { display: flex; gap: 17px; margin-left: 33px; }
.time { letter-spacing: .7px; }

.window {
  position: relative; width: 2876px; height: 1617px; border-radius: 22px 22px 26px 26px; overflow: hidden;
  display: flex; flex-direction: column; background: #f4b1bf; box-shadow: 0 0 0 1px rgba(60, 70, 76, .55);
}
.strip {
  display: flex; align-items: center; height: 80px; padding: 0 12px 0 42px;
  font-size: 23.300px; letter-spacing: .25px; box-shadow: inset 0 2px #f8cdd6;
}
.lights { display: flex; gap: 16px; width: 136px; }
.lights i { width: 24px; height: 24px; border-radius: 50%; border: 1px solid rgba(0, 0, 0, .12); }
.r { background: #ec6a5e; }
.y { background: #f4bf4f; }
.g { background: #61c554; }
.tab { position: relative; flex: none; width: 410px; height: 80px; display: flex; align-items: center; padding: 12px 0 0 6px; }
.tab:not(.nosep)::after { content: ""; flex: none; width: 4px; height: 32px; border-radius: 2px; background: #f9e1e4; margin: -12px -2px 0 0; }
.tab-body { position: relative; flex: 1; min-width: 0; height: 68px; display: flex; align-items: center; padding: 0 28px 13px 17px; }
.nosep .tab-body { padding-right: 30px; }
.active { padding-right: 6px; }
.active .tab-body { padding: 0 23px 13px 18px; border-radius: 20px 20px 0 0; background: #f9e1e4; }
.active .tab-body::before, .active .tab-body::after { content: ""; position: absolute; bottom: 0; width: 24px; height: 24px; }
.active .tab-body::before { left: -24px; background: radial-gradient(circle at 0 0, transparent 23.500px, #f9e1e4 24px); }
.active .tab-body::after { right: -24px; background: radial-gradient(circle at 100% 0, transparent 23.500px, #f9e1e4 24px); }
.fav { width: 30px; }
.tab-title {
  flex: 1; min-width: 0; margin: 0 20px 0 17px; overflow: hidden; display: flex; gap: 11px; align-items: center;
  -webkit-mask-image: linear-gradient(90deg, #000 calc(100% - 44px), transparent); mask-image: linear-gradient(90deg, #000 calc(100% - 44px), transparent);
}
.wide { letter-spacing: .55px; }
.plus { margin-left: 23px; }
.chev { margin-left: auto; width: 56px; height: 56px; border-radius: 20px; background: #f9e1e4; display: grid; place-items: center; }

.toolbar { height: 92px; padding: 0 12px 0 32px; display: flex; align-items: center; background: #f9e1e4; border-radius: 20px 20px 0 0; }
.nav { display: flex; align-items: center; gap: 48px; width: 209px; }
.omni { width: 2173px; height: 68px; border-radius: 34px; background: #dcc8ca; display: flex; align-items: center; padding: 0 32px 0 9px; }
.site { width: 48px; height: 48px; border-radius: 50%; background: #f9e1e4; display: grid; place-items: center; }
.url { flex: 1; margin-left: 16px; font-size: 27px; letter-spacing: .62px; }
.url em { font-style: normal; color: #5f5558; letter-spacing: .32px; }
.puzzle { margin-left: 36px; margin-top: -4px; }
.vsep { width: 4px; height: 32px; border-radius: 2px; background: #f4b1bf; }
.toolbar .vsep { margin-left: 32px; }
.avatar { width: 40px; height: 40px; margin-left: 32px; border-radius: 50%; background: #3f6b27; color: #fff; font-size: 20px; display: grid; place-items: center; }
.update {
  margin-left: auto; width: 246px; height: 68px; border-radius: 34px; background: #f4b1bf; padding: 0 29px 0 24px;
  display: flex; align-items: center; justify-content: space-between; font-size: 25px; letter-spacing: .28px;
}
.bookmarks {
  height: 70px; padding: 0 38px 13px; display: flex; align-items: center; background: #f9e1e4;
  font-size: 23.300px; letter-spacing: .13px; border-bottom: 2px solid #cbb6b9;
}
.bookmarks .vsep { margin: 0 28px 0 30px; }
.bm { display: flex; align-items: center; gap: 12.500px; }

.page { position: relative; flex: 1; background: #323232; font-size: 28px; line-height: 40px; }
.hero { height: 152px; background: #1a1a1a; }
.content { padding: 112px 0 0 222px; color: #040507; }
.back { display: flex; align-items: center; gap: 10px; margin-left: -14px; font-weight: 500; }
h1 { margin-top: 48px; font-size: 60px; line-height: 72px; font-weight: 600; color: #030408; }
.sub { margin-top: 8px; font-size: 32px; line-height: 48px; color: #101114; }
.card { width: 1184px; height: 736px; margin-top: 64px; border-radius: 32px; overflow: hidden; background: #333; box-shadow: 0 8px 16px rgba(0, 0, 0, .12); }
.photo { position: relative; height: 512px; padding: 328px 48px 0; background: linear-gradient(180deg, #262626, #121212); }
.art { position: absolute; left: 0; top: 0; filter: blur(.8px); }
.art text { font-family: "DejaVu Serif", serif; font-size: 172px; font-variant-ligatures: none; fill: #070a09; stroke: #070a09; stroke-width: 4px; }
h2 { position: relative; font-size: 48px; line-height: 64px; font-weight: 600; color: #333; }
.badges { position: relative; display: flex; gap: 16px; margin-top: 16px; letter-spacing: -.05px; }
.badge { display: flex; align-items: center; gap: 8px; height: 56px; padding: 0 16px; border-radius: 12px; color: #333; background: rgba(8, 8, 8, .4); }
.price { background: #0a130a; }
.body { padding: 48px; font-size: 32px; line-height: 48px; color: #0a0b0d; }
.tags { display: flex; gap: 16px; margin-top: 32px; }
.tags span { height: 48px; padding: 0 16px; border-radius: 24px; background: #303030; font-size: 24px; line-height: 48px; }

.overlay { position: absolute; inset: 0; display: flex; align-items: center; justify-content: center; }
.modal {
  position: relative; width: 896px; height: 854px; padding: 48px; border: 2px solid #e4e6e4; border-radius: 16px;
  background: #fff; box-shadow: 0 20px 30px -6px rgba(0, 0, 0, .25); white-space: normal;
}
.x { position: absolute; right: 38px; top: 38px; }
h3 { font-size: 36px; line-height: 36px; font-weight: 600; letter-spacing: -.9px; color: #0a0c0a; }
.desc { margin-top: 12px; color: #717a70; }
.box { margin-top: 64px; padding: 32px; border-radius: 12px; background: #f1fdf5; color: #3c8049; }
h4 { font-size: 32px; line-height: 48px; font-weight: 500; color: #2c6437; margin-bottom: 16px; }
.box p + p { margin-top: 8px; }
code { font-family: "DejaVu Sans Mono", "Liberation Mono", monospace; }
.dash { display: inline-block; transform: scaleX(1.65); }
.total { padding-top: 8px; border-top: 2px solid #c3f3d0; font-weight: 600; }
button {
  display: block; margin-top: 64px; width: 140px; height: 80px; border: 0; border-radius: 12px; background: #395d30;
  color: #fff; font: 500 28px/80px Inter, sans-serif; box-shadow: 0 0 0 4px #fff, 0 0 0 8px #395d30;
}
.toast {
  position: absolute; left: 2068px; top: 1156px; width: 776px; height: 188px; padding: 48px; border-radius: 12px;
  border: 2px solid #e3e3e3; background: linear-gradient(180deg, #fff 75%, #f5f5f5); color: #222; box-shadow: 0 10px 30px rgba(0, 0, 0, .2);
}
.toast b { font-weight: 600; color: #0a0a0a; }
.toast p { margin-top: 8px; }

.dock {
  position: relative; width: 2727px; height: 112px; margin: 3px 0 0 76px; padding: 14px 15px 0; border: 2px solid #7b8ca2; border-radius: 44px;
  display: flex; align-items: flex-start; gap: 22px;
  background: linear-gradient(90deg, #586685, #576a84 25%, #5a6785 45%, #576a77 58%, #566c82 80%, #5b7686 94%);
}
.slot { position: relative; width: 72px; height: 72px; }
.slot > svg { width: 72px; height: 72px; filter: drop-shadow(0 2px 2px rgba(0, 0, 0, .3)); }
.run::after { content: ""; position: absolute; left: 31px; top: 84px; width: 8px; height: 8px; border-radius: 50%; background: #000; }
.pill {
  position: absolute; left: 47px; top: -9px; width: 34px; height: 34px; border-radius: 50%; background: #e2513f; color: #fff;
  font-size: 19px; line-height: 34px; text-align: center;
}
.div { width: 2px; height: 84px; margin: -2px 9px 0; background: #24405a; }
.div.second { margin: -2px 3px 0 9px; }
.mini { width: 84px; padding-top: 13px; margin-right: -12px; }
.mini > svg:first-child { width: 84px; height: 48px; }
.mini .tag-chrome { position: absolute; left: 56px; top: 50px; width: 27px; height: 27px; }
.trash { width: 66px; margin: -6px 0 0 8px; }
.trash > svg { width: 66px; height: 84px; }
</style>
